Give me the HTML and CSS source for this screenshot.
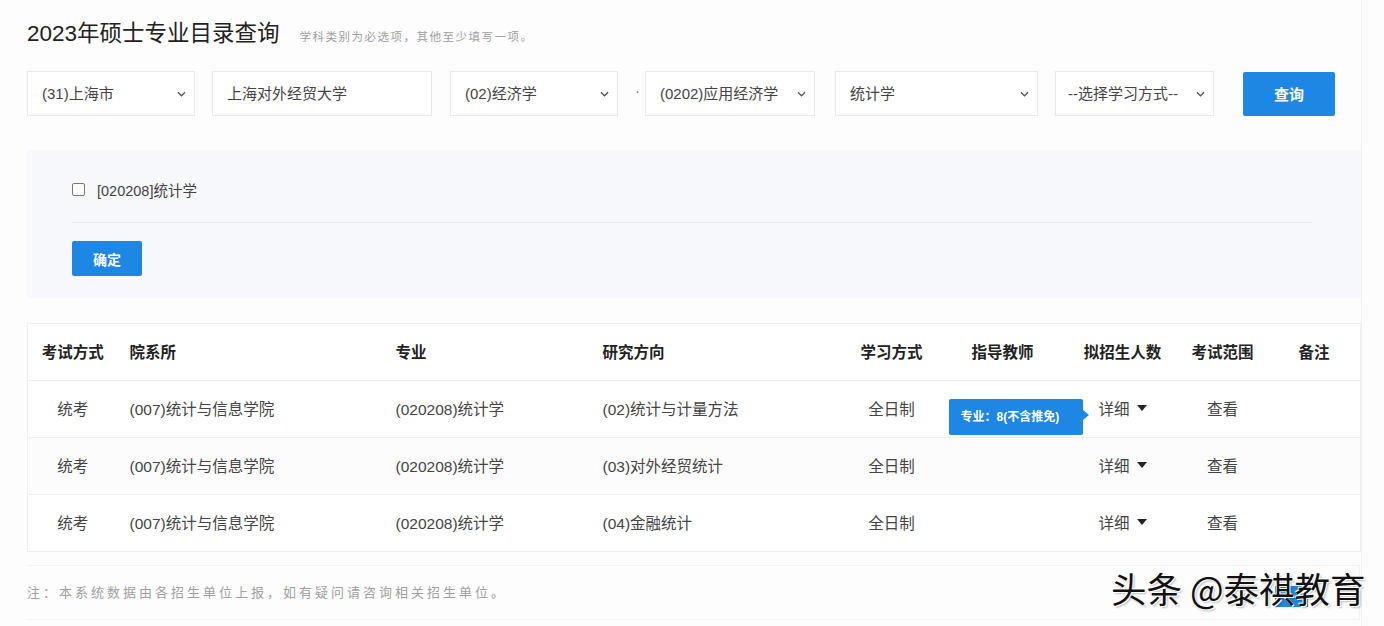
FILE: index.html
```html
<!DOCTYPE html>
<html lang="zh-CN">

<head>
  <meta charset="UTF-8">
  <meta name="viewport" content="width=device-width, initial-scale=1.0">
  <title>硕士专业目录查询</title>
  <link rel="stylesheet" href="styles.css">
</head>

<body>
  <div class="page">
    <div class="title-bar">
      <h1 class="title">2023年硕士专业目录查询</h1>
      <span class="title-tip">学科类别为必选项，其他至少填写一项。</span>
    </div>

    <div class="query-row">
      <div class="field select w-ssdm">(31)上海市
        <svg class="chev" viewBox="0 0 10 6"><path d="M1 1l4 4 4-4" fill="none" stroke="#555" stroke-width="1.4" /></svg>
      </div>
      <div class="field w-dwmc">上海对外经贸大学</div>
      <div class="field select w-mldm">(02)经济学
        <svg class="chev" viewBox="0 0 10 6"><path d="M1 1l4 4 4-4" fill="none" stroke="#555" stroke-width="1.4" /></svg>
      </div>
      <span class="dot">·</span>
      <div class="field select w-yjxk">(0202)应用经济学
        <svg class="chev" viewBox="0 0 10 6"><path d="M1 1l4 4 4-4" fill="none" stroke="#555" stroke-width="1.4" /></svg>
      </div>
      <div class="field select w-zymc">统计学
        <svg class="chev" viewBox="0 0 10 6"><path d="M1 1l4 4 4-4" fill="none" stroke="#555" stroke-width="1.4" /></svg>
      </div>
      <div class="field select w-xxfs">--选择学习方式--
        <svg class="chev" viewBox="0 0 10 6"><path d="M1 1l4 4 4-4" fill="none" stroke="#555" stroke-width="1.4" /></svg>
      </div>
      <button class="btn btn-query">查询</button>
    </div>

    <div class="zy-panel">
      <label class="zy-option"><span class="checkbox"></span>[020208]统计学</label>
      <div class="zy-divider"></div>
      <button class="btn btn-ok">确定</button>
    </div>

    <table class="result">
      <colgroup>
        <col style="width:90px">
        <col style="width:266px">
        <col style="width:207px">
        <col style="width:241px">
        <col style="width:120px">
        <col style="width:102px">
        <col style="width:138px">
        <col style="width:62px">
        <col style="width:107px">
      </colgroup>
      <thead>
        <tr>
          <th class="c">考试方式</th>
          <th>院系所</th>
          <th>专业</th>
          <th>研究方向</th>
          <th class="c">学习方式</th>
          <th class="c">指导教师</th>
          <th class="c">拟招生人数</th>
          <th class="c">考试范围</th>
          <th class="note-col">备注</th>
        </tr>
      </thead>
      <tbody>
        <tr>
          <td class="c">统考</td>
          <td>(007)统计与信息学院</td>
          <td>(020208)统计学</td>
          <td>(02)统计与计量方法</td>
          <td class="c">全日制</td>
          <td></td>
          <td class="c tip-cell">
            <span class="detail">详细 <i class="caret"></i></span>
            <div class="tooltip">专业：8(不含推免)</div>
          </td>
          <td class="c">查看</td>
          <td></td>
        </tr>
        <tr>
          <td class="c">统考</td>
          <td>(007)统计与信息学院</td>
          <td>(020208)统计学</td>
          <td>(03)对外经贸统计</td>
          <td class="c">全日制</td>
          <td></td>
          <td class="c"><span class="detail">详细 <i class="caret"></i></span></td>
          <td class="c">查看</td>
          <td></td>
        </tr>
        <tr>
          <td class="c">统考</td>
          <td>(007)统计与信息学院</td>
          <td>(020208)统计学</td>
          <td>(04)金融统计</td>
          <td class="c">全日制</td>
          <td></td>
          <td class="c"><span class="detail">详细 <i class="caret"></i></span></td>
          <td class="c">查看</td>
          <td></td>
        </tr>
      </tbody>
    </table>

    <div class="footer-note">注：本系统数据由各招生单位上报，如有疑问请咨询相关招生单位。</div>
  </div>

  <a class="back-top"></a>
  <div class="watermark">头条 @泰祺教育</div>
</body>

</html>
```

FILE: styles.css
```css
body {
  margin: 0;
  background: #fdfdfe;
  font-family: "Liberation Sans", "Noto Sans CJK SC", sans-serif;
  color: #444;
}

.page {
  width: 1362px;
  min-height: 626px;
  box-sizing: border-box;
  padding: 19px 0 0 27px;
  border-right: 1px solid #eef0f3;
}

/* 标题 */
.title-bar {
  display: flex;
  align-items: baseline;
  height: 30px;
}
.title {
  margin: 0;
  font-size: 22.5px;
  font-weight: normal;
  line-height: 30px;
  color: #222;
}
.title-tip {
  margin-left: 20px;
  font-size: 11.5px;
  letter-spacing: 1.5px;
  color: #a0a0a0;
}

/* 查询条件 */
.query-row {
  display: flex;
  align-items: center;
  margin-top: 22px;
  height: 45px;
}
.field {
  position: relative;
  height: 45px;
  box-sizing: border-box;
  border: 1px solid #e8e9ec;
  background: #fff;
  padding-left: 14px;
  font-size: 15px;
  line-height: 43px;
  color: #444;
  white-space: nowrap;
}
.field.select .chev {
  position: absolute;
  right: 8px;
  top: 19px;
  width: 9px;
  height: 6px;
}
.w-ssdm { width: 168px; margin-right: 17px; }
.w-dwmc { width: 220px; margin-right: 18px; }
.w-mldm { width: 168px; }
.dot {
  width: 27px;
  text-align: center;
  font-size: 14px;
  color: #777;
  padding-left: 12px;
  box-sizing: border-box;
  margin-top: -6px;
}
.w-yjxk { width: 170px; margin-right: 20px; }
.w-zymc { width: 203px; margin-right: 17px; }
.w-xxfs { width: 159px; margin-right: 29px; padding-left: 12px; }

.btn {
  border: 0;
  border-radius: 2px;
  background: #1e87e3;
  color: #fff;
  font-family: inherit;
  font-weight: bold;
  cursor: pointer;
}
.btn-query {
  width: 92px;
  height: 44px;
  font-size: 15px;
}

/* 专业选择 */
.zy-panel {
  margin-top: 34px;
  height: 148px;
  box-sizing: border-box;
  padding: 28px 49px 0 45px;
  background: #f6f8fb;
}
.zy-option {
  display: flex;
  align-items: center;
  height: 22px;
  font-size: 14.5px;
  color: #444;
}
.checkbox {
  width: 11px;
  height: 11px;
  border: 1px solid #777;
  border-radius: 2px;
  background: #fff;
  margin-right: 12px;
}
.zy-divider {
  margin-top: 22px;
  height: 1px;
  background: #e5e8ec;
}
.btn-ok {
  margin-top: 18px;
  width: 70px;
  height: 35px;
  font-size: 14px;
}

/* 结果表格 */
.result {
  margin-top: 25px;
  width: 1333px;
  table-layout: fixed;
  border-collapse: collapse;
  background: #fff;
  border: 1px solid #eef0f3;
  font-size: 15.5px;
}
.result th {
  height: 53px;
  text-align: left;
  padding: 0 0 3px 12px;
  font-weight: bold;
  color: #222;
  border-bottom: 1px solid #eff1f4;
}
.result td {
  height: 53px;
  padding: 0 0 3px 12px;
  color: #444;
  border-bottom: 1px solid #eceef2;
}
.result tbody tr:nth-child(2) td {
  background: #fcfcfd;
}
.result .c {
  text-align: center;
  padding-left: 0;
}
.result .note-col {
  padding-left: 45px;
}
.detail {
  display: inline-flex;
  align-items: center;
}
.caret {
  display: inline-block;
  margin-left: 7px;
  border-left: 5px solid transparent;
  border-right: 5px solid transparent;
  border-top: 6px solid #222;
}
.tip-cell {
  position: relative;
}
.tooltip {
  position: absolute;
  left: -105px;
  top: 18px;
  width: 134px;
  height: 36px;
  box-sizing: border-box;
  padding-left: 12px;
  background: #1e87e3;
  border-radius: 2px;
  color: #fff;
  font-size: 12px;
  font-weight: bold;
  line-height: 36px;
  text-align: left;
}
.tooltip::after {
  content: "";
  position: absolute;
  right: -6px;
  top: 11px;
  border-top: 5px solid transparent;
  border-bottom: 5px solid transparent;
  border-left: 6px solid #1e87e3;
}

/* 底部说明 */
.footer-note {
  margin-top: 13px;
  width: 1333px;
  height: 55px;
  box-sizing: border-box;
  border: 1px solid #f1f2f5;
  border-left: 0;
  line-height: 53px;
  font-size: 13px;
  letter-spacing: 3px;
  color: #a0a0a0;
}

.back-top {
  position: absolute;
  left: 1275px;
  top: 586px;
  width: 33px;
  height: 21px;
  background: #1e87e3;
}
.watermark {
  position: absolute;
  left: 1111px;
  top: 565px;
  font-family: "Noto Sans CJK SC", sans-serif;
  font-size: 35.5px;
  line-height: 46px;
  color: #111;
  text-shadow: 1px 1px 0 #fff, -1px -1px 0 #fff, 2px 2px 2px rgba(0, 0, 0, 0.25);
  white-space: nowrap;
}
```
